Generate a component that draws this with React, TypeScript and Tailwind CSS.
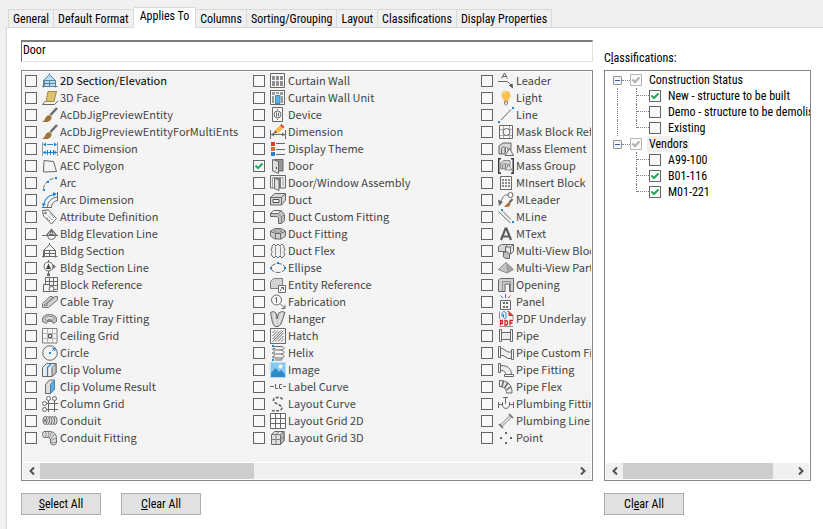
import { useState } from "react";
import type { ReactNode } from "react";
import clsx from "clsx";

const G = "#686868"
const B = "#1f86d6"

const house = (fill: string, stroke: string) => (
  <>
    <path d="M1.500 7.500L7.500 1.500l6 6z" fill={fill} stroke={stroke} />
    <path d="M2.500 7.500h11v6h-11z" fill={fill} stroke={stroke} />
    <path d="M7.500 8v5.500M3 10.500h10M0 13.500h15.500M7.500 0v2M1.500 7.500v7M13.500 7.500v7" stroke={stroke} />
  </>
)

const brush = (
  <>
    <path d="M8.500 8L15 1" stroke="#6b6b6b" strokeWidth="2.500" />
    <path d="M0 15c2.500-1 2.500-3 4-5s4-2.500 5.500-.5c.5 3-2 5.500-5 5.500z" fill="#a0713f" />
  </>
)

const mass = (
  <>
    <path d="M1 13V5l4-3h8v7l-3 4V8c0-2-3-2-3 0v5z" fill="#d8d8d8" stroke={G} />
    <path d="M3.500 13V7.500c0-2 4-2 4 0V11" stroke={G} />
    <path d="M7 14.500l4.500-7 4 7z" fill="#ededed" stroke={G} />
  </>
)

// every drawing sits on a 16x16 grid
const icons: Record<string, ReactNode> = {
  "2D Section/Elevation": house("#b8dcf3", "#5b829e"),
  "3D Face": (
    <>
      <path d="M3.500 11L.5 14.500h12L16 11" stroke={G} />
      <path d="M6 1.500h8.500L12 11.500H4z" fill="#dcc06c" stroke="#a58a43" />
    </>
  ),
  "AcDbJigPreviewEntity": brush,
  "AcDbJigPreviewEntityForMultiEnts": brush,
  "AEC Dimension": (
    <>
      <path d="M.5 1v14M15.500 1v14" stroke="#9a9a9a" />
      <path d="M5 3.500h6M1 11.500h14M5.500 9v5M8.500 9v5M11.500 9v5" stroke={B} />
      <path d="M1 3.500l3-2v4zM15 3.500l-3-2v4zM1 11.500l2.500-2v4zM15 11.500l-2.500-2v4z" fill={B} />
    </>
  ),
  "AEC Polygon": <path d="M2 2.500l9.500 1 3 10-13 .5z" fill="#f4f4f4" stroke={G} />,
  "Arc": (
    <>
      <path d="M1.500 13.500C2 9.500 5 4 14 3" stroke={G} strokeDasharray="4 1.500" />
      <path d="M1 14h2v2H1zM5 6h2v2H5zM13 2h2v2h-2z" fill={B} />
    </>
  ),
  "Arc Dimension": (
    <>
      <path d="M5.500 15.500C5.500 10 9 6 15.500 5M9.500 15.500C9.500 12 11 9.500 15.500 8.500M15.500 0v9M0 15.500h10" stroke={G} />
      <path d="M2 12C3 6 6 3.500 12 2.500" stroke={B} strokeWidth="1.200" />
      <path d="M1 15l-1-4 4 1zM15 2l-4-2v4.500z" fill={B} />
    </>
  ),
  "Attribute Definition": (
    <>
      <path d="M.5 1.500l6-.5 8 8.500-5 5.500-8-8z" fill="#f8f8f8" stroke={G} />
      <circle cx="3.500" cy="4" r="1" stroke={G} />
      <path d="M6 6.500l4.500 4.500M8 4.500l4 4.500M5 9l3 3" stroke={G} strokeDasharray="1.500 1" />
    </>
  ),
  "Bldg Elevation Line": (
    <>
      <path d="M0 9.500h16" stroke={G} />
      <path d="M3.500 9.500l6-7 6 7z" fill={G} />
      <circle cx="9.500" cy="9.500" r="4" fill="#f4f4f4" stroke={G} />
      <path d="M5 9.500h9M9.500 5.500l-2 3h4z" stroke={G} />
    </>
  ),
  "Bldg Section": house("#f7f7f7", G),
  "Bldg Section Line": (
    <>
      <path d="M7.500 2L14 6.500l-6.500 5z" fill={G} />
      <path d="M6.500 0v15" stroke={G} />
      <circle cx="6.500" cy="6.500" r="4.500" fill="#f4f4f4" stroke={G} />
      <path d="M6.500 3.500L9 9H4z" fill="#444" />
      <path d="M5 13.500h3V16H5z" fill={G} />
    </>
  ),
  "Block Reference": (
    <>
      <path d="M3.500.5h12v12H12M3.500.5V7M3.500 4.500h12M7.500.5V8M11.500.5v9M7 8.500h8.500" stroke={G} />
      <path d="M6.500 14.500h-5v-7h6v2M.5 14.500h15" stroke={G} />
      <circle cx="9.500" cy="12" r="2.500" fill="#f4f4f4" stroke={G} />
    </>
  ),
  "Cable Tray": (
    <>
      <path d="M.5 9.500L8 2.500h2.500v2L13 2.500h2.500V6L6.500 13.500H.5z" fill="#d0d0d0" stroke="#777" />
      <path d="M2.500 10v1.500h2.500V9.500L12 3.500" stroke="#777" />
      <path d="M3.500 10L10 4.500" stroke="#909090" strokeWidth="1.500" />
    </>
  ),
  "Cable Tray Fitting": (
    <>
      <path d="M.5 8C.5 2 14.500 2 14.500 8v2.500L11 12.500l-1-2H5.500l-1 2-4-2z" fill="#c4c4c4" stroke="#777" />
      <ellipse cx="7.500" cy="7.500" rx="4.500" ry="2" fill="#e2e2e2" stroke="#909090" />
      <path d="M5.500 10c0-2 4-2 4 0" stroke={G} />
    </>
  ),
  "Ceiling Grid": (
    <>
      <path d="M.5.5h14.500v14.500H.5z" fill="#f6f6f6" stroke="#7d7d7d" />
      <path d="M5.500 1v14M10.500 1v14M1 5.500h14M1 10.500h14" stroke="#b5b5b5" />
      <path d="M6.500 6.500h3v3h-3z" stroke="#4f4f4f" />
    </>
  ),
  "Circle": (
    <>
      <circle cx="8" cy="8" r="7.250" stroke={G} />
      <path d="M7 7h2v2H7z" fill={B} />
      <path d="M10 6l3-3M10.500 3.500h2.500V6" stroke={B} />
    </>
  ),
  "Clip Volume": (
    <>
      <path d="M.5 5.500l4-4H14v9l-4 4H.5z" fill="#ececec" stroke={G} />
      <path d="M10 14.500v-9l4-4v9z" fill="#c9c9c9" stroke={G} />
      <path d="M5.500 14V5.500l4-4" stroke={B} strokeWidth="1.200" />
    </>
  ),
  "Clip Volume Result": (
    <>
      <path d="M3.500 5.500l4-4.500h5v9.500l-4 4h-5z" fill="#dcdcdc" stroke={G} />
      <path d="M8.500 14.500v-9L12.500 1v9.500z" fill="#5aaee6" stroke="#4b7fa5" />
    </>
  ),
  "Column Grid": (
    <>
      <path d="M6.500 4.500V16M12.500 4.500V16M4 7.500h12M4 13.500h12" stroke={G} />
      <g fill="#f7f7f7" stroke={G}>
        <circle cx="6.500" cy="2.500" r="2" />
        <circle cx="12.500" cy="2.500" r="2" />
        <circle cx="2.500" cy="7.500" r="2" />
        <circle cx="2.500" cy="13.500" r="2" />
      </g>
    </>
  ),
  "Conduit": (
    <g fill="#dedede" stroke={G}>
      {[13, 10.500, 8, 5.500, 3].map((x) => <ellipse key={x} cx={x} cy="7.500" rx="2" ry="4" />)}
      <ellipse cx="3" cy="7.500" rx=".5" ry="1.500" />
    </g>
  ),
  "Conduit Fitting": (
    <>
      <path d="M2 1.500h5c5 0 8 3 7.500 8V13c-1 2.500-5 2.500-6 0v-3c0-1.500-1-2.500-3-2.500H2C0 6.500 0 2.500 2 1.500z" fill="#dadada" stroke={G} />
      <path d="M3 2c1.500 1 1.500 4.500 0 5.500M6 1.500c1 1.500 1 4.500-.5 6M9.500 2L7.500 8M12.500 4l-4 5M14.500 8l-6 2.500M8.500 12.500h6" stroke="#959595" />
    </>
  ),
  "Curtain Wall": (
    <>
      <path d="M.5.5h14v14H.5z" fill="#fafafa" stroke={G} />
      <path d="M2 3h3v4H2zM6 3h3v4H6zM10 3h3v4h-3zM2 8h3v5H2zM6 8h3v5H6zM10 8h3v5h-3z" fill="#8f8f8f" />
    </>
  ),
  "Curtain Wall Unit": (
    <>
      <path d="M.5.5h14v14H.5z" fill="#fafafa" stroke={G} />
      <path d="M2 2h3v3H2zM6 2h3v2H6zM10 2h3v3h-3zM2 6h2v7H2zM11 6h2v7h-2z" fill="#9a9a9a" />
      <path d="M5.500 5.500h4.500v8H5.500z" fill="#62b0e8" stroke="#3c86bd" />
    </>
  ),
  "Device": (
    <>
      <path d="M2.500.5h10v14h-10z" fill="#fafafa" stroke={G} />
      <circle cx="7.500" cy="7.500" r="3.500" stroke={G} />
      <path d="M6.500 5.500v4M8.500 5.500v4M7 2.500h1M7 12.500h1" stroke={G} />
    </>
  ),
  "Dimension": (
    <>
      <path d="M.5 6v9M15.500 6v9M1 10.500h14" stroke={G} />
      <path d="M1 10.500l3-2v4zM15 10.500l-3-2v4z" fill={G} />
      <path d="M4 9.500l1-3.500 5-4.500 3 3-5 4.500z" fill="#f7bd4b" />
      <path d="M10 1.500L11.500 0 14.500 3 13 4.500z" fill="#e8402c" />
      <path d="M4 9.500l1-3 2 2z" fill="#555" />
    </>
  ),
  "Display Theme": (
    <>
      <path d="M6 2.500h9M6 8.500h9M6 13.500h9" stroke={G} />
      <path d="M1 1h4v4H1z" fill="#ef3535" />
      <path d="M1 6h4v4H1z" fill="#c87331" />
      <path d="M1 11h4v4H1z" fill={B} />
    </>
  ),
  "Door": (
    <>
      <path d="M4.500 1.500h8.500v11.500h-8.500z" fill="#979797" stroke={G} />
      <path d="M2.500 1.500L8.500 3.500V15.500l-6-2.500z" fill="#dedede" stroke={G} />
      <path d="M6.500 9v2" stroke="#444" />
    </>
  ),
  "Door/Window Assembly": (
    <>
      <path d="M.5.5h15V13H.5z" fill="#f0f0f0" stroke={G} />
      <path d="M2.500 13V2.500h10.500V11" stroke="#a0a0a0" />
      <path d="M5 3h6v10H5z" fill="#808080" />
      <path d="M4.500 3L9 5v10.500l-4.500-2z" fill="#e2e2e2" stroke={G} />
    </>
  ),
  "Duct": (
    <>
      <path d="M.5 5.500l4-4h11v7l-4 4.500H.5z" fill="#d5d5d5" stroke={G} />
      <path d="M.5 5.500h11V13M11.500 5.500l4-4" stroke={G} />
      <path d="M3 7.500h6v3H3z" fill="#f6f6f6" stroke="#505050" />
    </>
  ),
  "Duct Custom Fitting": (
    <>
      <path d="M.5 4.500l3-3H11l3.500 4v6L11.500 14.500H8.500V9L7 7.500H.5z" fill="#c4c4c4" stroke={G} />
      <path d="M.5 4.500l3-3H11L8 4.500z" fill="#f0f0f0" stroke={G} />
      <path d="M8 4.500l3.500 3.500v6M11.500 8l3-2.500" stroke="#858585" />
    </>
  ),
  "Duct Fitting": (
    <>
      <path d="M.5 5L5 2.500h6L15.500 5v5L11 13H5L.5 10z" fill="#d0d0d0" stroke={G} />
      <path d="M1 5.500l4.500 2h5l4.500-2M5.500 7.500V13M10.500 7.500V13" stroke={G} />
      <path d="M4 5l2-1h4l2 1-2 1H6z" fill="#f5f5f5" stroke="#7c7c7c" />
    </>
  ),
  "Duct Flex": (
    <>
      <path d="M2 3l2-2 2 2 2-2 2 2 2-2 2 2v2l1 1.500-1 2v1l1 1.500-1 2-2 2-2-2-2 2-2-2-2 2-2-2-1-2 1-1.500v-1l-1-2L2 5z" fill="#f1f1f1" stroke={G} />
      <path d="M5.500 3.500v9M10.500 3.500v9" stroke="#909090" />
    </>
  ),
  "Ellipse": (
    <>
      <ellipse cx="8" cy="8" rx="7" ry="4.500" stroke={G} strokeDasharray="5 1.500" />
      <path d="M7 2h2v2H7zM0 7h2v2H0zM14 7h2v2h-2z" fill={B} />
    </>
  ),
  "Entity Reference": (
    <>
      <path d="M.5 4.500l3-3h9v7l-3 3h-9z" fill="#d4d4d4" stroke="#808080" />
      <path d="M8.500 8.500h7v7h-7z" fill="#fafafa" stroke={G} />
      <path d="M10.500 14v-1l3-3M11 10.500h2.500V13" stroke={G} />
    </>
  ),
  "Fabrication": (
    <>
      <circle cx="6.500" cy="6" r="5" fill="#f9f9f9" stroke={G} />
      <path d="M5 4.500L6.500 3.500V9M10.500 10l4 4M11.500 14.500h3.500V11" stroke={G} />
    </>
  ),
  "Hanger": (
    <>
      <path d="M.5 1.500l3-1L6 2l1 6L8.500 2l3.500-1.500 3 1L11 13l-3 2.500H5L2.500 12z" fill="#d0d0d0" stroke={G} />
      <path d="M4 2.500l2 12M12 2L8.500 14" stroke="#eee" />
    </>
  ),
  "Hatch": (
    <>
      <path d="M.5.5h15v15H.5z" fill="#f6f6f6" stroke={G} />
      <path d="M2.500 5l2.500-2.500M2.500 8L8 2.500M2.500 11L11 2.500M2.500 13.500l11-11M5 13.500l8.500-8.500M8 13.500L13.500 8M11 13.500l2.500-2.500" stroke={G} />
    </>
  ),
  "Helix": (
    <>
      <path d="M4 1.500h7c4 0 4 3.500 0 3.500H5c-3.500 0-3.500-1.500 0-1.500M11 5c4 1 4 4 0 4H5c-3.500 0-3.500-2 0-2M11 9c4 1 4 4 0 4H5c-3.500 0-3.500-2 0-2M11 13c2 1 1 2 0 2H5" stroke={G} />
      <path d="M2 0h2v2H2zM2 14h2v2H2z" fill={B} />
    </>
  ),
  "Image": (
    <>
      <path d="M.5.5h15v15H.5z" fill="#86c9f7" stroke="#b5dcf7" />
      <path d="M1 11l4.500-5L9 10l2-2 4 4v3H1z" fill="#3189c9" />
      <circle cx="10.500" cy="4.500" r="2" fill="#fdf6c6" />
    </>
  ),
  "Label Curve": <path d="M0 7.500h4M5.500 5v4.500h2.500M12 5.500H9.500v4H12M13 7.500h3" stroke={G} />,
  "Layout Curve": <path d="M12.500 3.500C11 0 3 1 3.500 4.500S12 8.500 12 12c0 2.500-5 3.500-10 2.500" stroke={G} strokeWidth="1.700" strokeDasharray="3 1.500" />,
  "Layout Grid 2D": (
    <>
      <path d="M.5.5h15v15H.5z" fill="#fcfcfc" stroke={G} />
      <path d="M5.500 0v16M10.500 0v16M0 5.500h16M0 10.500h16" stroke={G} />
    </>
  ),
  "Layout Grid 3D": (
    <>
      <path d="M1.500 4.500l3-3H14v9l-3.500 4h-9z" fill="#e0e0e0" stroke={G} />
      <path d="M10.500 14.500v-10l3.500-3v9z" fill="#bdbdbd" stroke={G} />
      <path d="M1.500 4.500h9M6 4.500v10M1.500 9.500h9l3.500-3.500M6 4.500l3-3" stroke="#808080" />
    </>
  ),
  "Leader": (
    <>
      <path d="M3.500 5.500L6.500 0l3 5.500M4.500 3.500h4M0 8.500h9.500l4 4" stroke={G} />
      <path d="M15 15.500l-4-3 3.500-2z" fill="#4e4e4e" />
    </>
  ),
  "Light": (
    <>
      <path d="M3.500 5.500c0-6.500 9-6.500 9 0 0 2.500-2 3-2.500 6H6c-.5-3-2.500-3.500-2.500-6z" fill="#fcc04c" />
      <path d="M5.500 3.500c.5-1 1.500-1.500 2.500-1.500" stroke="#fff0c2" />
      <path d="M6.500 11.500h3V14l-1.500 1.500L6.500 14z" fill="#ddd" stroke="#8b8b8b" />
    </>
  ),
  "Line": (
    <>
      <path d="M3 13L13 2.500" stroke={G} />
      <path d="M0 14h2v2H0zM14 0h2v2h-2z" fill={B} />
    </>
  ),
  "Mask Block Reference": (
    <>
      <path d="M1.500 1.500h13v13h-13z" fill="#f8f8f8" stroke={G} />
      <path d="M5.500 2v12M11.500 2v12M2 5.500h12M2 11.500h12" stroke="#ababab" />
      <circle cx="8.500" cy="8" r="3.500" fill="#f4f4f4" stroke={G} />
    </>
  ),
  "Mass Element": mass,
  "Mass Group": (
    <>
      <g transform="translate(2 1) scale(.76)">{mass}</g>
      <path d="M3 .75H.75v14.500H3M13 .75h2.250v14.500H13" stroke="#3c3c3c" strokeWidth="1.500" />
    </>
  ),
  "MInsert Block": (
    <>
      <path d="M2.500 1.500h11v13h-11z" fill="#f8f8f8" stroke={G} />
      <path d="M4 4h2v2H4zM7 4h2v2H7zM10 4h2v2h-2zM4 7h2v2H4zM7 7h2v2H7zM10 7h2v2h-2zM4 10h2v2H4zM7 10h2v2H7zM10 10h2v2h-2z" fill="#8a8a8a" />
    </>
  ),
  "MLeader": (
    <>
      <circle cx="12.500" cy="3" r="2.500" fill="#fafafa" stroke={G} />
      <path d="M10 3C6 2 5 5 2 11" stroke={G} />
      <path d="M0 7.500l5 2.500-4 4z" fill={G} />
      <path d="M11 11l3.500-4" stroke={G} strokeWidth="2" />
      <path d="M6 14.500c2-.5 2-3 4-3.500s3 1 2 2.500-3 2-6 1z" fill="#b0713a" />
    </>
  ),
  "MLine": (
    <>
      <path d="M.5 2.500L12.500 14M5 2.500L13 10.500" stroke={G} />
      <path d="M3 0h2v2H3zM14 12h2v2h-2z" fill={B} />
    </>
  ),
  "MText": <path d="M3 14L7.500 2.500h1L13 14M5 10.500h6" stroke="#5c5c5c" strokeWidth="2.200" />,
  "Multi-View Block Reference": (
    <>
      <path d="M.5 3.500l3-2H10v5l-2.500 2h-7z" fill="#d8d8d8" stroke={G} />
      <path d="M7.500 4l2.500-2.500h5.500v7l-3 2.500h-5z" fill="#e6e6e6" stroke={G} />
      <path d="M7.500 4h5v7M12.500 4l3-2.500" stroke={G} />
      <path d="M5.500 9h4l2 2v4.500h-4L5.500 14z" fill="#bdbdbd" stroke={G} />
    </>
  ),
  "Multi-View Part": (
    <>
      <path d="M8 2.500L15.500 9.500 9 13 .5 9.500z" fill="#c6c6c6" stroke="#888" />
      <path d="M8 3L9 13 15 9.500z" fill="#a2a2a2" />
    </>
  ),
  "Opening": (
    <>
      <path d="M.5 3l2-1.500h13v13h-4V7H7v7.500H.5z" fill="#d2d2d2" stroke={G} />
      <path d="M4.500 14V4.500h8v9.500" stroke="#8d8d8d" />
    </>
  ),
  "Panel": (
    <>
      <path d="M2.500 6.500h10v9h-10z" fill="#f6f6f6" stroke={G} />
      <path d="M5 8h2v2H5zM8 8h2v2H8zM5 12h2v2H5zM8 12h2v2H8z" fill="#666" />
      <path d="M7.500 0v4" stroke="#8d53c9" />
      <path d="M2.500 1.500L5 4" stroke={B} />
      <path d="M12.500 1.500L10 4" stroke="#e2484b" />
    </>
  ),
  "PDF Underlay": (
    <>
      <path d="M1.500 8V.5M9 .5h2l4 4V15.500H1.500" stroke="#8f8f8f" />
      <path d="M4 6V2.500C4 0 8 0 8 2.500V6C8 8 5.500 8 5.500 6V3" stroke={B} />
      <path d="M10.500 0l5 5h-5z" fill="#d93235" />
      <path d="M1 8.500h15V15H1z" fill="#fff" />
      <path d="M2.500 14.500v-5h2v3h-2M7 9.500v4.500h1.500l1-1v-2.500l-1-1zM12 14.500v-5h3M12 12h2.500" stroke="#d21f24" strokeWidth="1.300" />
    </>
  ),
  "Pipe": (
    <>
      <path d="M3 4.500h10v7H3z" fill="#ececec" stroke={G} />
      <path d="M1.500 1.500h2v12h-2zM12.500 1.500h2v12h-2z" fill="#fafafa" stroke={G} />
    </>
  ),
  "Pipe Custom Fitting": (
    <>
      <path d="M2.500 3.500h2L10 7h3.500v6.500H10L5 10.500H2.500z" fill="#ececec" stroke={G} />
      <path d="M.5 1.500h2v11h-2zM13.500 4.500h2v10h-2z" fill="#fafafa" stroke={G} />
    </>
  ),
  "Pipe Fitting": (
    <>
      <path d="M2.500 3.500c7 0 11 3 11 9h-6c0-3-1-4-5-4z" fill="#ececec" stroke={G} />
      <path d="M.5 1.500h2v9h-2zM6.500 12.500h9v2h-9z" fill="#fafafa" stroke={G} />
    </>
  ),
  "Pipe Flex": (
    <>
      <path d="M1.500 1.500C9 1.500 14.500 6 14 14H8.500C8.500 10 6 7.500 1.500 7.500z" fill="#ececec" stroke={G} />
      <path d="M5.500 1.500L4 8M10 3.500L6.500 9M13 7.500L8.500 11" stroke={G} strokeWidth="1.500" />
    </>
  ),
  "Plumbing Fitting": (
    <>
      <path d="M.5 6v6M15.500 6v6M.5 8.500h4M11.500 8.500h4M7.500 2v6M5 1.500h5" stroke={G} />
      <path d="M4.500 6v3c0 4.500 7 4.500 7 0V6" stroke={G} />
    </>
  ),
  "Plumbing Line": (
    <>
      <path d="M2.500 12L12 2.500M4 13.500L13.500 4" stroke="#7c7c7c" />
      <path d="M1 11l4 4M11 1l4 4" stroke={G} strokeWidth="1.500" />
    </>
  ),
  "Point": <path d="M7 2h2v2H7zM2 7h2v2H2zM12 7h2v2h-2zM7 12h2v2H7z" fill={G} />,
}

const columns = [
  [
    "2D Section/Elevation", "3D Face", "AcDbJigPreviewEntity", "AcDbJigPreviewEntityForMultiEnts", "AEC Dimension",
    "AEC Polygon", "Arc", "Arc Dimension", "Attribute Definition", "Bldg Elevation Line", "Bldg Section",
    "Bldg Section Line", "Block Reference", "Cable Tray", "Cable Tray Fitting", "Ceiling Grid", "Circle",
    "Clip Volume", "Clip Volume Result", "Column Grid", "Conduit", "Conduit Fitting",
  ],
  [
    "Curtain Wall", "Curtain Wall Unit", "Device", "Dimension", "Display Theme", "Door", "Door/Window Assembly",
    "Duct", "Duct Custom Fitting", "Duct Fitting", "Duct Flex", "Ellipse", "Entity Reference", "Fabrication",
    "Hanger", "Hatch", "Helix", "Image", "Label Curve", "Layout Curve", "Layout Grid 2D", "Layout Grid 3D",
  ],
  [
    "Leader", "Light", "Line", "Mask Block Reference", "Mass Element", "Mass Group", "MInsert Block", "MLeader",
    "MLine", "MText", "Multi-View Block Reference", "Multi-View Part", "Opening", "Panel", "PDF Underlay", "Pipe",
    "Pipe Custom Fitting", "Pipe Fitting", "Pipe Flex", "Plumbing Fitting", "Plumbing Line", "Point",
  ],
]

const tabs = ["General", "Default Format", "Applies To", "Columns", "Sorting/Grouping", "Layout", "Classifications", "Display Properties"]

const tree = [
  { label: "Construction Status", items: ["New - structure to be built", "Demo - structure to be demolished", "Existing"] },
  { label: "Vendors", items: ["A99-100", "B01-116", "M01-221"] },
]

interface CheckProps {
  id: string
  checked: boolean
  onChange?: () => void
  muted?: boolean
}

function Check({ id, checked, onChange, muted }: CheckProps) {
  return (
    <span className="grid shrink-0">
      <input
        id={id}
        type="checkbox"
        checked={checked}
        readOnly={!onChange}
        onChange={onChange}
        className={clsx("col-start-1 row-start-1 size-3 appearance-none border bg-[#f8f8f8]", muted ? "border-[#b8b8b8]" : "border-[#646464]")}
      />
      {checked && (
        <svg viewBox="0 0 12 12" className="pointer-events-none col-start-1 row-start-1 size-3" fill="none">
          <path d="M2.500 5.500L5 8l4.500-4.500" stroke={muted ? "#b0b0b0" : "#25a858"} strokeWidth="2" />
        </svg>
      )}
    </span>
  )
}

function Arrow({ dir }: { dir: "left" | "right" }) {
  return (
    <button type="button" aria-label={"Scroll " + dir} className="grid w-[17px] shrink-0 place-items-center">
      <svg viewBox="0 0 8 8" className="size-2" fill="none" stroke="#505050" strokeWidth="2">
        <path d={dir === "left" ? "M6 .5L2.500 4 6 7.500" : "M2 .5L5.500 4 2 7.500"} />
      </svg>
    </button>
  )
}

function ScrollBar({ thumb }: { thumb: string }) {
  return (
    <div className="mt-px flex h-4 bg-[#f0f0f0]">
      <Arrow dir="left" />
      <div className="flex-1">
        <div className={clsx("h-full bg-[#cdcdcd]", thumb)} />
      </div>
      <Arrow dir="right" />
    </div>
  )
}

function PushButton({ children, onClick }: { children: ReactNode, onClick: () => void }) {
  return (
    <button type="button" onClick={onClick} className="h-[22px] w-20 border border-[#adadad] bg-[#e1e1e1] text-center">
      {children}
    </button>
  )
}

export default function App() {

  const [activeTab, setActiveTab] = useState("Applies To")
  const [search, setSearch] = useState("Door")
  const [selected, setSelected] = useState<string[]>(["Door"])
  const [classes, setClasses] = useState<string[]>(["New - structure to be built", "B01-116", "M01-221"])

  const toggle = (list: string[], item: string) =>
    list.includes(item) ? list.filter((i) => i !== item) : [...list, item]

  return (
    <div className="min-h-screen bg-[#f0f0f0] pt-[7px] pl-1.5 font-['Roboto_Condensed','Roboto',sans-serif] text-xs leading-4 text-black">
      <div role="tablist" className="flex items-end pl-0.5">
        {tabs.map((tab) => (
          <button
            key={tab}
            type="button"
            role="tab"
            aria-selected={tab === activeTab}
            onClick={() => setActiveTab(tab)}
            className={clsx(
              "relative whitespace-nowrap border-t border-r border-[#d9d9d9] first:border-l",
              tab === activeTab ? "-mb-px h-[21px] bg-white px-1.5 pb-1" : "h-[18px] px-1"
            )}
          >
            {tab}
          </button>
        ))}
      </div>

      <main className="border-y border-l border-[#d9d9d9] bg-white pt-3 pr-3 pb-3.5 pl-3.5">
        <div className="flex gap-[11px]">
          <section className="min-w-0 flex-1">
            <input
              aria-label="Object type filter"
              value={search}
              onChange={(e) => setSearch(e.target.value)}
              className="block h-[22px] w-full border border-t-2 border-t-[#7d7d7d] border-r-[#e3e3e3] border-b-[#e3e3e3] border-l-[#6d6d6d] bg-white pb-1 pl-px outline-none"
            />
            <div className="mt-2 border border-[#828790] bg-white p-px">
              <div className="flex overflow-hidden bg-[#f4f4f4] pb-4 font-['Noto_Sans_CJK_SC','Open_Sans',sans-serif] text-[11px] leading-[17px] text-[#444]">
                {columns.map((names, col) => (
                  <ul key={col} className="w-[228px] shrink-0 pl-0.5">
                    {names.map((name, row) => (
                      <li key={name} className="flex h-[17px] items-center">
                        <Check id={"obj-" + name} checked={selected.includes(name)} onChange={() => setSelected(toggle(selected, name))} />
                        <label htmlFor={"obj-" + name} className="flex items-center gap-0.5 pl-[5px] whitespace-nowrap">
                          <svg viewBox="0 0 16 16" className="size-4 shrink-0" fill="none">{icons[name]}</svg>
                          <span className={clsx(col === 0 && row === 0 && "bg-[#f0f0f0] text-black")}>{name}</span>
                        </label>
                      </li>
                    ))}
                  </ul>
                ))}
              </div>
              <ScrollBar thumb="w-2/5" />
            </div>
          </section>

          <section className="flex w-[207px] shrink-0 flex-col">
            <h2 className="mt-2.5 mb-1">C<u>l</u>assifications:</h2>
            <div className="flex flex-1 flex-col border border-[#828790] bg-white">
              <ul className="flex-1 overflow-hidden pt-px whitespace-nowrap">
                {tree.map((group, g) => (
                  <li key={group.label}>
                    <div className="flex h-4 items-center pl-2">
                      <button type="button" aria-label={"Collapse " + group.label} className="grid size-[9px] place-items-center rounded-[1px] border border-[#919191] bg-[#f6f6f6]">
                        <span className="h-px w-[5px] bg-[#3b57a5]" />
                      </button>
                      <span className="w-2 border-t border-dotted border-[#808080]" />
                      <Check id={"grp-" + g} checked muted />
                      <label htmlFor={"grp-" + g} className={clsx("ml-[5px] px-0.5", g === 1 && "bg-[#f0f0f0]")}>{group.label}</label>
                    </div>
                    <ul>
                      {group.items.map((item, i) => (
                        <li key={item} className="flex h-4 items-center pl-3">
                          <span className={clsx("h-4 w-[19px] shrink-0 border-dotted border-[#808080]", g === 0 && "border-l")} />
                          <span className={clsx("w-[13px] shrink-0 self-start border-l border-dotted border-[#808080]", i === group.items.length - 1 ? "h-2" : "h-4")}>
                            <span className="block h-2 border-b border-dotted border-[#808080]" />
                          </span>
                          <Check id={"cls-" + item} checked={classes.includes(item)} onChange={() => setClasses(toggle(classes, item))} />
                          <label htmlFor={"cls-" + item} className="ml-[5px] px-0.5">{item}</label>
                        </li>
                      ))}
                    </ul>
                  </li>
                ))}
              </ul>
              <div className="px-px pb-px">
                <ScrollBar thumb="w-8/9" />
              </div>
            </div>
          </section>
        </div>

        <div className="mt-3 flex gap-[11px]">
          <div className="flex flex-1 gap-5">
            <PushButton onClick={() => setSelected(columns.flat())}><u>S</u>elect All</PushButton>
            <PushButton onClick={() => setSelected([])}><u>C</u>lear All</PushButton>
          </div>
          <div className="w-[207px] shrink-0">
            <PushButton onClick={() => setClasses([])}>Cl<u>e</u>ar All</PushButton>
          </div>
        </div>
      </main>
    </div>
  );
}
